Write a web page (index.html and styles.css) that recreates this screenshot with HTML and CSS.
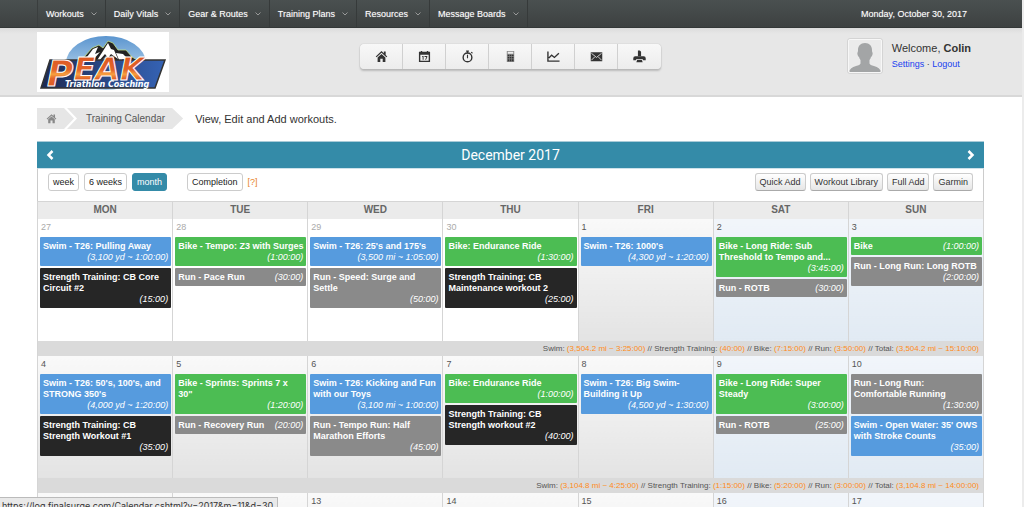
FILE: index.html
```html
<!DOCTYPE html>
<html lang="en">
<head>
    <meta charset="UTF-8">
    <meta name="viewport" content="width=device-width, initial-scale=1.0">
    <title>Training Calendar</title>
    <link rel="stylesheet" href="styles.css">
</head>
<body>

    <nav class="topbar">
        <ul class="menu">
            <li><a href="#">Workouts <svg class="caret" viewBox="0 0 6 4"><path d="M.5 .5 3 3 5.500 .5"/></svg></a></li>
            <li><a href="#">Daily Vitals <svg class="caret" viewBox="0 0 6 4"><path d="M.5 .5 3 3 5.500 .5"/></svg></a></li>
            <li><a href="#">Gear &amp; Routes <svg class="caret" viewBox="0 0 6 4"><path d="M.5 .5 3 3 5.500 .5"/></svg></a></li>
            <li><a href="#">Training Plans <svg class="caret" viewBox="0 0 6 4"><path d="M.5 .5 3 3 5.500 .5"/></svg></a></li>
            <li><a href="#">Resources <svg class="caret" viewBox="0 0 6 4"><path d="M.5 .5 3 3 5.500 .5"/></svg></a></li>
            <li><a href="#">Message Boards <svg class="caret" viewBox="0 0 6 4"><path d="M.5 .5 3 3 5.500 .5"/></svg></a></li>
        </ul>
        <span class="today">Monday, October 30, 2017</span>
    </nav>

    <header class="header">
        <svg class="logo" viewBox="0 0 132 60" role="img" aria-label="Peak Triathlon Coaching">
            <defs>
                <linearGradient id="sky" x1="0" y1="0" x2="0" y2="1">
                    <stop offset="0" stop-color="#5b95cf"/>
                    <stop offset=".6" stop-color="#a9cbe8"/>
                </linearGradient>
                <linearGradient id="fire" x1="0" y1="0" x2="0" y2="1">
                    <stop offset="0" stop-color="#d9521f"/>
                    <stop offset=".45" stop-color="#e2642a"/>
                    <stop offset=".55" stop-color="#f7a040"/>
                    <stop offset=".65" stop-color="#e2642a"/>
                    <stop offset="1" stop-color="#d9521f"/>
                </linearGradient>
                <linearGradient id="plate" x1="0" y1="0" x2="1" y2="0">
                    <stop offset="0" stop-color="#1d2a52"/>
                    <stop offset="1" stop-color="#3563b5"/>
                </linearGradient>
            </defs>
            <rect width="132" height="60" fill="#fff"/>
            <ellipse cx="69" cy="31" rx="40" ry="27" fill="url(#sky)"/>
            <path d="M38 31 48 24 55 16 62 13 66 16 71 9 76 11 81 18 89 18 95 25 107 32V36H38Z" fill="#222" stroke="#bfe08a" stroke-width=".8"/>
            <path d="M40 31 50 25 56 17 61 15 58 22 63 20 55 29 47 32ZM66 19 71 11 74 17 77 18 81 27 74 22 71 26 68 22 61 30 59 30ZM79 21 86 22 92 28 100 32 91 31 86 27 83 30Z" fill="#fff"/>
            <path d="M62 31 69 24 72 27 75 23 80 32Z" fill="#8b8b8b"/>
            <path d="M13 28H128L118 56H4Z" fill="url(#plate)" stroke="#333" stroke-width="1.500"/>
            <text class="logo-name" x="10" y="48"><tspan class="logo-initial" dy="6">P</tspan><tspan dy="-6">EAK</tspan></text>
            <text class="logo-sub" x="28" y="55">Triathlon Coaching</text>
        </svg>

        <div class="shortcuts">
            <button type="button" aria-label="Home"><svg viewBox="0 0 14 14"><path d="M7 1 .8 7 1.700 7.900 7 3 12.300 7.900 13.200 7 11.500 5.300V1.500H9.500V3.400Z"/><path d="M2.800 8 7 4.200 11.200 8V13H8.300V9.500H5.700V13H2.800Z"/></svg></button>
            <button type="button" aria-label="Calendar"><svg viewBox="0 0 14 14"><path fill-rule="evenodd" d="M1 2H3V1H4.500V2H9.500V1H11V2H13V13H1ZM2.500 5V11.500H11.500V5Z"/><path d="M4.500 6.500H6V10.500H5V7.500H4.500ZM7 6.500H10V7.500L8.700 10.500H7.700L9 7.500H7Z"/></svg></button>
            <button type="button" aria-label="Stopwatch"><svg viewBox="0 0 14 14"><circle class="line" cx="7" cy="8" r="4.700"/><path d="M5.500 .5H8.500V2H7.700V3.500H6.300V2H5.500ZM10.500 2.500 11.500 1.800 12.700 3 12 4ZM6.400 5H7.600V8.800H6.400Z"/></svg></button>
            <button type="button" aria-label="Calculator"><svg viewBox="0 0 14 14"><path fill="#888" d="M3 1H11V13H3Z"/><path fill="#eee" d="M4 2H10V4H4Z"/><path d="M4 5H5.700V6.700H4ZM6.300 5H8V6.700H6.300ZM8.600 5H10.300V6.700H8.600ZM4 7.500H5.700V9.200H4ZM6.300 7.500H8V9.200H6.300ZM8.600 7.500H10.300V9.200H8.600ZM4 10H5.700V12H4ZM6.300 10H8V12H6.300ZM8.600 10H10.300V12H8.600Z"/></svg></button>
            <button type="button" aria-label="Reports"><svg viewBox="0 0 14 14"><path class="line" d="M1 1.500V12H13.500M2 8.500 5 5.500 8 8 12.800 3.500"/></svg></button>
            <button type="button" aria-label="Messages"><svg viewBox="0 0 14 14"><path d="M.8 2.500H13.200V12H.8Z"/><path d="M1.500 3.500 7 8 12.500 3.500M1.500 11 5 7.500M12.500 11 9 7.500" fill="none" stroke="#eee" stroke-width=".9"/></svg></button>
            <button type="button" aria-label="Print"><svg viewBox="0 0 14 14"><path d="M5.300 .5H7.300L8.700 2V6.800H5.300Z"/><path d="M2.500 6.800H11.500Q13.700 7 13.700 9V11H11L10 9.800H4L3 11H.3V9Q.3 7 2.500 6.800Z"/><path d="M4.500 10.400H9.500L10.400 13.200H3.600Z"/></svg></button>
        </div>

        <div class="user">
            <svg class="avatar" viewBox="0 0 32 32" role="img" aria-label="Colin"><path d="M16 3C20.500 3 23 6 23 10Q23 11 23.200 12 24 12.500 23.500 14.500 23 16.500 22 17 21.500 19 20.500 20V23.500Q21 25 25 26 31 27.500 32 32H0Q1 27.500 7 26 11 25 11.500 23.500V20Q10.500 19 10 17 9 16.500 8.500 14.500 8 12.500 8.800 12 9 11 9 10C9 6 11.500 3 16 3Z"/></svg>
            <div>
                <div class="welcome">Welcome, <b>Colin</b></div>
                <div class="links"><a href="#">Settings</a> · <a href="#">Logout</a></div>
            </div>
        </div>
    </header>

    <main class="content">
        <div class="crumbs">
            <a class="crumb crumb-home" href="#" aria-label="Home"><svg viewBox="0 0 14 14"><path d="M7 1.500 .8 7.300 1.700 8.200 7 3.500 12.300 8.200 13.200 7.300 11.500 5.800V2H9.500V3.900Z"/><path d="M2.800 8 7 4.500 11.200 8V13H8.300V9.500H5.700V13H2.800Z"/></svg></a>
            <a class="crumb crumb-page" href="#">Training Calendar</a>
            <span class="intro">View, Edit and Add workouts.</span>
        </div>

        <section class="calendar">
            <div class="month">
                <button type="button" aria-label="Previous month"><svg viewBox="0 0 8 10"><path d="M6.500 1 2.500 5 6.500 9"/></svg></button>
                <h1>December 2017</h1>
                <button type="button" aria-label="Next month"><svg viewBox="0 0 8 10"><path d="M1.500 1 5.500 5 1.500 9"/></svg></button>
            </div>

            <div class="toolbar">
                <div class="views">
                    <button type="button">week</button>
                    <button type="button">6 weeks</button>
                    <button type="button" class="active">month</button>
                </div>
                <button type="button">Completion</button>
                <a class="help" href="#">[?]</a>
                <div class="actions">
                    <button type="button">Quick Add</button>
                    <button type="button">Workout Library</button>
                    <button type="button">Full Add</button>
                    <button type="button">Garmin</button>
                </div>
            </div>

            <table class="days">
                <thead>
                    <tr><th>MON</th><th>TUE</th><th>WED</th><th>THU</th><th>FRI</th><th>SAT</th><th>SUN</th></tr>
                </thead>
                <tbody>
                    <tr class="week">
                        <td class="other">
                            <div class="date">27</div>
                            <div class="event swim"><b>Swim - T26: Pulling Away</b><i>(3,100 yd ~ 1:00:00)</i></div>
                            <div class="event strength"><b>Strength Training: CB Core Circuit #2</b><i>(15:00)</i></div>
                        </td>
                        <td class="other">
                            <div class="date">28</div>
                            <div class="event bike"><b>Bike - Tempo: Z3 with Surges</b><i>(1:00:00)</i></div>
                            <div class="event run"><b>Run - Pace Run</b><i>(30:00)</i></div>
                        </td>
                        <td class="other">
                            <div class="date">29</div>
                            <div class="event swim"><b>Swim - T26: 25's and 175's</b><i>(3,500 mi ~ 1:05:00)</i></div>
                            <div class="event run"><b>Run - Speed: Surge and Settle</b><i>(50:00)</i></div>
                        </td>
                        <td class="other">
                            <div class="date">30</div>
                            <div class="event bike"><b>Bike: Endurance Ride</b><i>(1:30:00)</i></div>
                            <div class="event strength"><b>Strength Training: CB Maintenance workout 2</b><i>(25:00)</i></div>
                        </td>
                        <td>
                            <div class="date">1</div>
                            <div class="event swim"><b>Swim - T26: 1000's</b><i>(4,300 yd ~ 1:20:00)</i></div>
                        </td>
                        <td class="weekend">
                            <div class="date">2</div>
                            <div class="event bike"><b>Bike - Long Ride: Sub Threshold to Tempo and...</b><i>(3:45:00)</i></div>
                            <div class="event run"><b>Run - ROTB</b><i>(30:00)</i></div>
                        </td>
                        <td class="weekend">
                            <div class="date">3</div>
                            <div class="event bike"><b>Bike</b><i>(1:00:00)</i></div>
                            <div class="event run"><b>Run - Long Run: Long ROTB</b><i>(2:00:00)</i></div>
                        </td>
                    </tr>
                    <tr class="totals">
                        <td colspan="7">Swim: <em>(3,504.2 mi ~ 3:25:00)</em> // Strength Training: <em>(40:00)</em> // Bike: <em>(7:15:00)</em> // Run: <em>(3:50:00)</em> // Total: <em>(3,504.2 mi ~ 15:10:00)</em></td>
                    </tr>
                    <tr class="week">
                        <td>
                            <div class="date">4</div>
                            <div class="event swim"><b>Swim - T26: 50's, 100's, and STRONG 350's</b><i>(4,000 yd ~ 1:20:00)</i></div>
                            <div class="event strength"><b>Strength Training: CB Strength Workout #1</b><i>(35:00)</i></div>
                        </td>
                        <td>
                            <div class="date">5</div>
                            <div class="event bike"><b>Bike - Sprints: Sprints 7 x<br>30"</b><i>(1:20:00)</i></div>
                            <div class="event run"><b>Run - Recovery Run</b><i>(20:00)</i></div>
                        </td>
                        <td>
                            <div class="date">6</div>
                            <div class="event swim"><b>Swim - T26: Kicking and Fun with our Toys</b><i>(3,100 mi ~ 1:00:00)</i></div>
                            <div class="event run"><b>Run - Tempo Run: Half Marathon Efforts</b><i>(45:00)</i></div>
                        </td>
                        <td>
                            <div class="date">7</div>
                            <div class="event bike"><b>Bike: Endurance Ride</b><i>(1:00:00)</i></div>
                            <div class="event strength"><b>Strength Training: CB Strength workout #2</b><i>(40:00)</i></div>
                        </td>
                        <td>
                            <div class="date">8</div>
                            <div class="event swim"><b>Swim - T26: Big Swim- Building it Up</b><i>(4,500 yd ~ 1:30:00)</i></div>
                        </td>
                        <td class="weekend">
                            <div class="date">9</div>
                            <div class="event bike"><b>Bike - Long Ride: Super Steady</b><i>(3:00:00)</i></div>
                            <div class="event run"><b>Run - ROTB</b><i>(25:00)</i></div>
                        </td>
                        <td class="weekend">
                            <div class="date">10</div>
                            <div class="event run"><b>Run - Long Run:<br>Comfortable Running</b><i>(1:30:00)</i></div>
                            <div class="event swim"><b>Swim - Open Water: 35' OWS with Stroke Counts</b><i>(35:00)</i></div>
                        </td>
                    </tr>
                    <tr class="totals">
                        <td colspan="7">Swim: <em>(3,104.8 mi ~ 4:25:00)</em> // Strength Training: <em>(1:15:00)</em> // Bike: <em>(5:20:00)</em> // Run: <em>(3:00:00)</em> // Total: <em>(3,104.8 mi ~ 14:00:00)</em></td>
                    </tr>
                    <tr class="week">
                        <td></td>
                        <td></td>
                        <td><div class="date">13</div></td>
                        <td><div class="date">14</div></td>
                        <td><div class="date">15</div></td>
                        <td class="weekend"><div class="date">16</div></td>
                        <td class="weekend"><div class="date">17</div></td>
                    </tr>
                </tbody>
            </table>
        </section>
    </main>

    <div class="status">https://log.finalsurge.com/Calendar.cshtml?y=2017&amp;m=11&amp;d=30</div>

</body>
</html>
```
FILE: styles.css
```css
* {
    box-sizing: border-box;
}
body {
    margin: 0;
    height: 100vh;
    overflow: hidden;
    background: #fff;
    border-right: 2px solid #ececec;
    font-family: "Liberation Sans", Arial, sans-serif;
    font-size: 9px;
    color: #333;
}
a {
    text-decoration: none;
}
button {
    font-family: inherit;
    font-size: 9px;
    cursor: pointer;
}

/* top menu */
.topbar {
    display: flex;
    justify-content: space-between;
    align-items: center;
    height: 28px;
    padding: 0 55px 0 37px;
    background: linear-gradient(#4a5050, #3d4141);
    border-bottom: 1px solid #343838;
    color: #fff;
}
.menu {
    display: flex;
    margin: 0;
    padding: 0;
    list-style: none;
    border-left: 1px solid #3a3e3e;
}
.menu a {
    display: flex;
    align-items: center;
    gap: 7px;
    height: 27px;
    padding: 0 8px;
    border-right: 1px solid #363a3a;
    color: #fff;
    text-shadow: 0 0 1px #999;
}
.caret {
    width: 6px;
    height: 4px;
    fill: none;
    stroke: #999;
}
.today {
    text-shadow: 0 0 1px #999;
}

/* header */
.header {
    display: grid;
    grid-template-columns: 1fr auto 1fr;
    align-items: start;
    height: 69px;
    padding: 4px 38px 0 37px;
    background: linear-gradient(#dcdcdc, #e7e7e7 6px);
    border-bottom: 2px solid #d8d8d8;
}
.logo {
    width: 132px;
    height: 60px;
}
.logo-name {
    font: italic bold 32px "DejaVu Sans", sans-serif;
    fill: url(#fire);
    stroke: #fff;
    stroke-width: 1px;
}
.logo-initial {
    font-size: 36px;
}
.logo-sub {
    font: italic bold 8px "DejaVu Sans", sans-serif;
    fill: #fff;
}
.shortcuts {
    display: flex;
    margin-top: 12px;
    border-radius: 4px;
    box-shadow: 0 0 1px #999, 0 2px 2px #bbb;
    overflow: hidden;
}
.shortcuts button {
    display: flex;
    align-items: center;
    justify-content: center;
    width: 43px;
    height: 25px;
    padding: 0;
    border: 0;
    border-right: 1px solid #d0d0d0;
    background: linear-gradient(#f8f8f8, #ececec);
}
.shortcuts button:last-child {
    border-right: 0;
}
.shortcuts svg {
    width: 13px;
    height: 13px;
    fill: #333;
}
.shortcuts .line {
    fill: none;
    stroke: #333;
    stroke-width: 1.5;
}
.user {
    display: flex;
    justify-self: end;
    gap: 9px;
    margin-top: 6px;
    padding-right: 13px;
}
.avatar {
    width: 36px;
    height: 36px;
    padding: 1px;
    background: #ebebeb;
    border: 1px solid #d4d4d4;
    outline: 1px solid #f7f7f7;
    outline-offset: -2px;
    border-radius: 3px;
    fill: #a3a5a6;
}
.welcome {
    padding-top: 4px;
    font-size: 11px;
    line-height: 13px;
}
.links {
    padding-top: 4px;
    line-height: 11px;
}
.links a {
    color: #1a3ff0;
}

/* breadcrumbs */
.content {
    padding: 11px 38px 0 37px;
}
.crumbs {
    display: flex;
    align-items: center;
    height: 21px;
    margin-bottom: 12px;
}
.crumb {
    display: flex;
    align-items: center;
    height: 21px;
    background: #e6e6e6;
    color: #555;
    font-size: 10px;
}
.crumb-home {
    width: 37px;
    padding-left: 9px;
    clip-path: polygon(0 0, 27px 0, 100% 50%, 27px 100%, 0 100%);
}
.crumb-home svg {
    width: 11px;
    height: 11px;
    fill: #888;
}
.crumb-page {
    margin-left: -7px;
    padding: 0 18px 0 19px;
    clip-path: polygon(0 0, calc(100% - 11px) 0, 100% 50%, calc(100% - 11px) 100%, 0 100%, 10px 50%);
}
.intro {
    margin-left: 12px;
    font-size: 11px;
}

/* calendar */
.calendar {
    border-top: 1px solid #a9cbd8;
}
.month {
    display: flex;
    align-items: center;
    justify-content: space-between;
    height: 26px;
    padding: 0 9px;
    background: #348ba8;
    color: #fff;
}
.month h1 {
    margin: 0;
    font: 14px Roboto, sans-serif;
}
.month button {
    display: flex;
    padding: 0;
    border: 0;
    background: none;
}
.month svg {
    width: 8px;
    height: 10px;
    fill: none;
    stroke: #fff;
    stroke-width: 2.5;
}
.toolbar {
    display: flex;
    align-items: center;
    height: 33px;
    padding: 0 10px 6px;
    border: 1px solid #ccc;
    border-top-color: #cde2ea;
    border-bottom: 0;
}
.toolbar button {
    height: 18px;
    padding: 0 4px;
    border: 1px solid #ccc;
    border-radius: 3px;
    background: #fff;
    color: #222;
}
.views {
    display: flex;
    gap: 5px;
    margin-right: 20px;
}
.toolbar .active {
    background: #348ba8;
    border-color: #348ba8;
    color: #fff;
}
.help {
    margin-left: 5px;
    color: #e8832a;
}
.actions {
    display: flex;
    gap: 4px;
    margin-left: auto;
}
.actions button {
    background: linear-gradient(#fff, #e6e6e6);
    border-bottom-color: #aaa;
    color: #333;
}
.days {
    width: 100%;
    table-layout: fixed;
    border-collapse: collapse;
}
.days th,
.days td {
    border: 0 solid #d5d5d5;
    border-width: 0 1px;
}
.days th {
    height: 17px;
    padding: 0;
    background: #ebebeb;
    border-top-width: 1px;
    font-size: 10px;
    line-height: 16px;
    color: #666;
}
.week td {
    height: 122px;
    padding: 0 1px 0 2px;
    vertical-align: top;
    background: linear-gradient(#f9f9f9, #e3e3e3);
}
.week .other {
    background: #fff;
}
.week .weekend {
    background: linear-gradient(#f1f5fa, #e1eaf3);
}
.date {
    height: 18px;
    padding-left: 1px;
    line-height: 17px;
    color: #555;
}
.other .date {
    color: #aaa;
}
.event {
    display: flex;
    flex-wrap: wrap;
    margin-bottom: 2px;
    padding: 4px 1px 3px 3px;
    border-radius: 1px;
    line-height: 11px;
    color: #fff;
}
.event i {
    margin-left: auto;
    padding-right: 2px;
    white-space: nowrap;
}
.swim {
    background: #569bde;
}
.bike {
    background: #4cbd53;
}
.run {
    background: #8a8a8a;
}
.strength {
    background: #262626;
}
.days .totals td {
    height: 15px;
    padding: 0 4px;
    background: #dadada;
    font-size: 8px;
    line-height: 15px;
    text-align: right;
    color: #555;
}
.totals em {
    font-style: normal;
    color: #ff8c1a;
}

/* browser link hint */
.status {
    position: fixed;
    left: 0;
    bottom: 0;
    height: 10px;
    padding: 2px 4px 0 2px;
    overflow: hidden;
    background: #e9e9e9;
    border: 1px solid #bbb;
    border-width: 1px 1px 0 0;
    font: 9px Inter, sans-serif;
}
```
